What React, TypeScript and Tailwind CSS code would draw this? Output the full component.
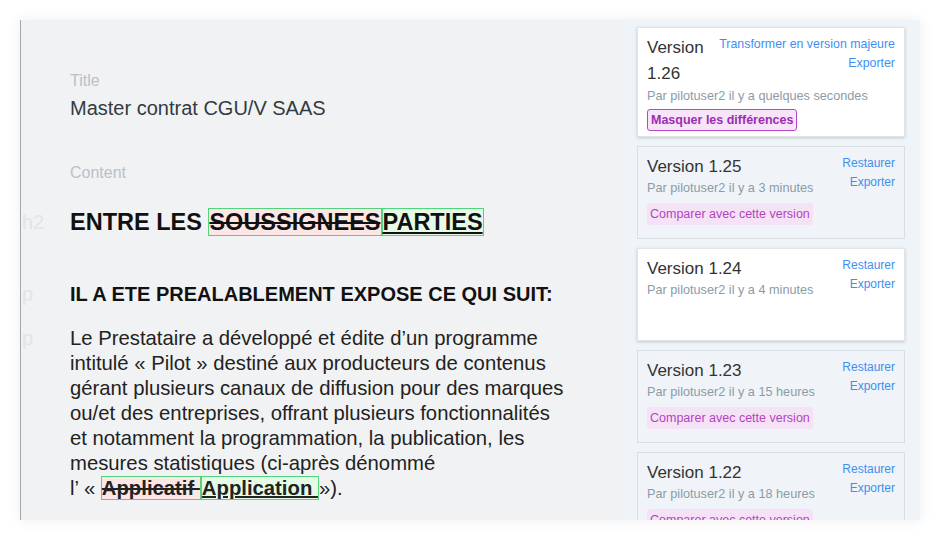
import React from "react";

const versions = [
  { num: "1.25", ago: "il y a 3 minutes", active: false, compare: true },
  { num: "1.24", ago: "il y a 4 minutes", active: true, compare: false },
  { num: "1.23", ago: "il y a 15 heures", active: false, compare: true },
  { num: "1.22", ago: "il y a 18 heures", active: false, compare: true },
];

function Gutter({ label }: { label?: string }) {
  return <span className="w-[49px] shrink-0 pl-[1px] text-[20px] font-normal text-[#e1e4e8]">{label}</span>;
}

export default function App() {
  return (
    <div className="w-[940px] h-[540px] bg-white p-[20px] font-['Liberation_Sans',Arial,sans-serif]">
      <div className="flex h-[500px] w-[900px] overflow-hidden shadow-[0_0_14px_rgba(0,0,0,0.07)]">
        {/* Editor */}
        <div className="w-[602px] shrink-0 bg-[#f1f2f4] border-l border-[#a4a8ad] pt-[51px]">
          <div className="pl-[49px]">
            <div className="text-[16px] leading-[20px] text-[#b9c1c9]">Title</div>
            <div className="mt-[5px] text-[20px] leading-[24px] text-[#333b40]">Master contrat CGU/V SAAS</div>
            <div className="mt-[43px] text-[16px] leading-[20px] text-[#b9c1c9]">Content</div>
          </div>

          <div className="mt-[24px] flex items-center leading-[30px]">
            <Gutter label="h2" />
            <h2 className="text-[23.5px] font-bold text-[#111]">
              ENTRE LES{" "}
              <span className="bg-[#fde6e6] border border-[#52d47e] line-through decoration-2">SOUSSIGNEES</span>
              <span className="bg-[#e6fbe6] border border-[#52d47e] underline decoration-2 underline-offset-2">PARTIES</span>
            </h2>
          </div>

          <div className="mt-[45px] flex items-center leading-[24px]">
            <Gutter label="p" />
            <p className="text-[20px] font-bold text-[#111]">IL A ETE PREALABLEMENT EXPOSE CE QUI SUIT:</p>
          </div>

          <div className="mt-[20px] flex leading-[25px]">
            <Gutter label="p" />
            <p className="text-[20.3px] text-[#222] whitespace-nowrap">
              Le Prestataire a développé et édite d’un programme
              <br />
              intitulé « Pilot » destiné aux producteurs de contenus
              <br />
              gérant plusieurs canaux de diffusion pour des marques
              <br />
              ou/et des entreprises, offrant plusieurs fonctionnalités
              <br />
              et notamment la programmation, la publication, les
              <br />
              mesures statistiques (ci-après dénommé
              <br />
              l’ «{" "}
              <span className="bg-[#fde6e6] border border-[#52d47e] font-bold line-through decoration-2">Applicatif </span>
              <span className="bg-[#e6fbe6] border border-[#52d47e] font-bold underline decoration-2">Application </span>
              »).
            </p>
          </div>
        </div>

        {/* Versions */}
        <div className="flex-1 bg-[#eff4f9] px-[15px] pt-[7px] flex flex-col gap-[9px]">
          <div className="h-[110px] shrink-0 bg-white border border-[#e2e4e7] shadow-[0_1px_3px_rgba(0,0,0,0.18)] px-[9px] pt-[7px]">
            <div className="flex justify-between gap-2">
              <div className="text-[17px] leading-[26px] text-[#333]">Version 1.26</div>
              <div className="text-right text-[12.4px] leading-[19px] text-[#3f8ff2] shrink-0">
                <div>Transformer en version majeure</div>
                <div>Exporter</div>
              </div>
            </div>
            <div className="text-[12.7px] leading-[18px] text-[#8c9ba5]">Par pilotuser2 il y a quelques secondes</div>
            <div className="mt-[4px] inline-block rounded-[3px] border border-[#b548c8] bg-[#f8e4f8] px-[3px] text-[12.5px] leading-[20px] font-bold text-[#9b2eb0]">
              Masquer les différences
            </div>
          </div>

          {versions.map((v) => (
            <div
              key={v.num}
              className={
                v.active
                  ? "h-[93px] shrink-0 bg-white border border-[#e2e4e7] shadow-[0_1px_3px_rgba(0,0,0,0.18)] px-[9px] pt-[8px]"
                  : "h-[93px] shrink-0 bg-[#f0f4f8] border border-[#d9dee3] px-[9px] pt-[8px]"
              }
            >
              <div className="flex justify-between gap-2">
                <div>
                  <div className="text-[17px] leading-[24px] text-[#333]">Version {v.num}</div>
                  <div className="text-[12.7px] leading-[18px] text-[#8c9ba5]">Par pilotuser2 {v.ago}</div>
                  {v.compare && (
                    <div className="mt-[6px] inline-block rounded-[3px] bg-[#f6e2f6] px-[3px] text-[12.5px] leading-[22px] text-[#b045c0]">
                      Comparer avec cette version
                    </div>
                  )}
                </div>
                <div className="-mt-[1px] text-right text-[12px] leading-[19px] text-[#3f8ff2]">
                  <div>Restaurer</div>
                  <div>Exporter</div>
                </div>
              </div>
            </div>
          ))}
        </div>
      </div>
    </div>
  );
}
